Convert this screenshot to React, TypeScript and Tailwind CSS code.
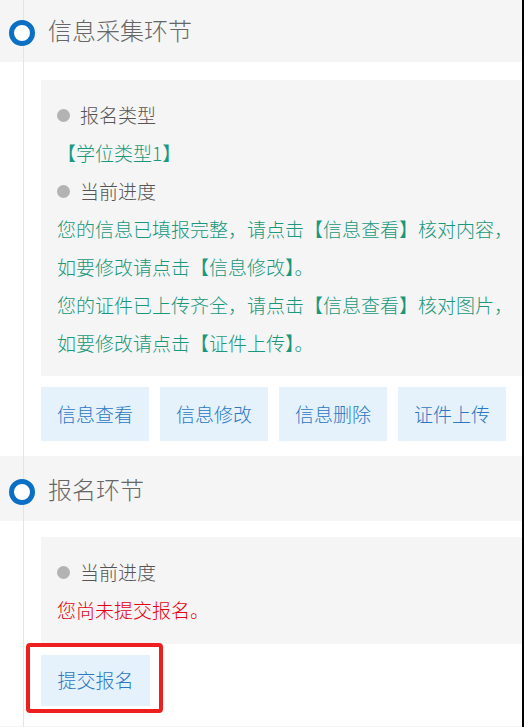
import React from 'react';

const infoButtons = ['信息查看', '信息修改', '信息删除', '证件上传'];

function StepHeader({ title, className = '' }: { title: string; className?: string }) {
  return (
    <div className={`flex items-center h-[65px] bg-[#f5f5f5] pl-[9px] ${className}`}>
      <span className="relative z-10 mt-[7px] w-[26px] h-[26px] rounded-full border-[5px] border-[#0b6fc3] bg-white shrink-0" />
      <span className="ml-[13px] text-[24px] leading-none font-light text-[#666]">{title}</span>
    </div>
  );
}

function Bullet({ label }: { label: string }) {
  return (
    <div className="flex items-center">
      <span className="w-[13px] h-[13px] rounded-full bg-[#b3b3b3]" />
      <span className="ml-[10px] text-[#555]">{label}</span>
    </div>
  );
}

export default function App() {
  return (
    <div
      className="relative w-[524px] h-[727px] overflow-hidden bg-white border-r-2 border-black font-light"
      style={{ fontFamily: '"Noto Sans CJK SC", "Noto Sans", sans-serif' }}
    >
      {/* timeline line */}
      <div className="absolute left-[23px] top-0 bottom-0 w-px bg-[#e4e4e4]" />

      {/* 信息采集环节 */}
      <StepHeader title="信息采集环节" className="-mt-[3px]" />
      <div className="pl-[41px] pt-[18px]">
        <div className="bg-[#f5f5f5] pl-4 pt-4 pb-[14px] text-[19px] leading-[38px] whitespace-nowrap">
          <Bullet label="报名类型" />
          <div className="text-[#18987c]">【学位类型1】</div>
          <Bullet label="当前进度" />
          <div className="text-[#18987c]">
            <div>您的信息已填报完整，请点击【信息查看】核对内容，</div>
            <div>如要修改请点击【信息修改】。</div>
            <div>您的证件已上传齐全，请点击【信息查看】核对图片，</div>
            <div>如要修改请点击【证件上传】。</div>
          </div>
        </div>
        <div className="flex gap-[11px] mt-[11px] mb-[15px]">
          {infoButtons.map(b => (
            <div
              key={b}
              className="w-[108px] h-[54px] flex items-center justify-center bg-[#e5f2fc] text-[19px] text-[#2b78c2]"
            >
              {b}
            </div>
          ))}
        </div>
      </div>

      {/* 报名环节 */}
      <StepHeader title="报名环节" />
      <div className="pl-[41px] pt-4">
        <div className="bg-[#f5f5f5] pl-4 pt-4 pb-[15px] text-[19px] leading-[38px] whitespace-nowrap">
          <Bullet label="当前进度" />
          <div className="text-[#e60012]">您尚未提交报名。</div>
        </div>
        <div className="mt-[11px] relative w-[109px]">
          <div className="w-[109px] h-[51px] flex items-center justify-center bg-[#e5f2fc] text-[19px] text-[#2b78c2]">
            提交报名
          </div>
          <div className="absolute -left-[15px] -top-[12px] w-[137px] h-[70px] border-4 border-[#ee1f1f] rounded-[4px]" />
        </div>
      </div>
      <div className="mt-[20px] h-[10px] bg-[#f5f5f5]" />
    </div>
  );
}
